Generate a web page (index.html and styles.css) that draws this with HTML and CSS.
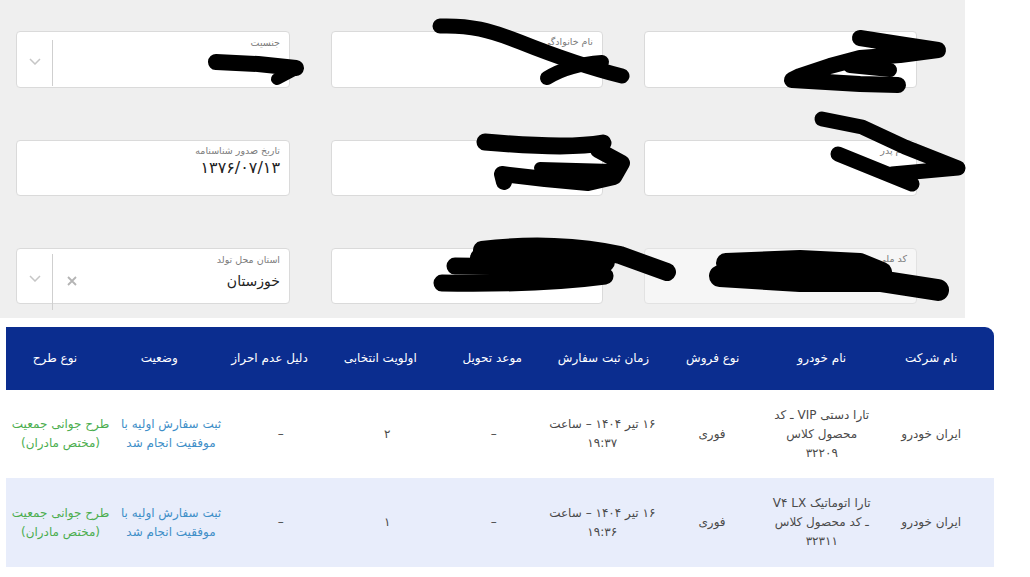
FILE: index.html
```html
<!DOCTYPE html>
<html lang="fa">
<head>
<meta charset="utf-8">
<title>اطلاعات سفارش</title>
<link rel="stylesheet" href="styles.css">
</head>
<body>
<div class="page">
  <section class="form-area" dir="rtl">
    <div class="field"><span class="label">نام</span></div>
    <div class="field"><span class="label">نام خانوادگی</span></div>
    <div class="field select">
      <div class="main"><span class="label">جنسیت</span><span class="value sel"></span></div>
      <span class="sep"></span>
      <span class="chev"><svg width="12" height="7" viewBox="0 0 12 7"><path d="M1 1 L6 6 L11 1" fill="none" stroke="#c6c6c6" stroke-width="1.5"/></svg></span>
    </div>

    <div class="field"><span class="label">نام پدر</span></div>
    <div class="field"><span class="label"></span></div>
    <div class="field"><span class="label">تاریخ صدور شناسنامه</span><span class="value date">۱۳۷۶/۰۷/۱۳</span></div>

    <div class="field disabled"><span class="label">کد ملی</span></div>
    <div class="field"><span class="label"></span></div>
    <div class="field select">
      <div class="main"><span class="label">استان محل تولد</span><span class="value sel">خوزستان</span></div>
      <span class="clear"><svg width="10" height="10" viewBox="0 0 10 10"><path d="M1 1 L9 9 M9 1 L1 9" fill="none" stroke="#b4b4b4" stroke-width="1.8"/></svg></span>
      <span class="sep long"></span>
      <span class="chev"><svg width="12" height="7" viewBox="0 0 12 7"><path d="M1 1 L6 6 L11 1" fill="none" stroke="#c6c6c6" stroke-width="1.5"/></svg></span>
    </div>
  </section>

  <section class="table" dir="rtl">
    <div class="thead">
      <div class="th">نام شرکت</div>
      <div class="th">نام خودرو</div>
      <div class="th">نوع فروش</div>
      <div class="th">زمان ثبت سفارش</div>
      <div class="th">موعد تحویل</div>
      <div class="th">اولویت انتخابی</div>
      <div class="th">دلیل عدم احراز</div>
      <div class="th">وضعیت</div>
      <div class="th">نوع طرح</div>
    </div>
    <div class="trow">
      <div class="td">ایران خودرو</div>
      <div class="td">تارا دستی VIP ـ کد<br>محصول کلاس<br>۳۲۲۰۹</div>
      <div class="td">فوری</div>
      <div class="td">۱۶ تیر ۱۴۰۴ – ساعت<br>۱۹:۳۷</div>
      <div class="td">–</div>
      <div class="td">۲</div>
      <div class="td">–</div>
      <div class="td status">ثبت سفارش اولیه با<br>موفقیت انجام شد</div>
      <div class="td plan">طرح جوانی جمعیت<br>(مختص مادران)</div>
    </div>
    <div class="trow alt">
      <div class="td">ایران خودرو</div>
      <div class="td">تارا اتوماتیک V۴ LX<br>ـ کد محصول کلاس<br>۳۲۳۱۱</div>
      <div class="td">فوری</div>
      <div class="td">۱۶ تیر ۱۴۰۴ – ساعت<br>۱۹:۳۶</div>
      <div class="td">–</div>
      <div class="td">۱</div>
      <div class="td">–</div>
      <div class="td status">ثبت سفارش اولیه با<br>موفقیت انجام شد</div>
      <div class="td plan">طرح جوانی جمعیت<br>(مختص مادران)</div>
    </div>
  </section>

  <svg class="scribbles" width="1030" height="577" viewBox="0 0 1030 577">
    <g fill="none" stroke="#000" stroke-linecap="round" stroke-linejoin="round">
      <path stroke-width="16" d="M216,62 L258,64 L296,68"/>
      <path stroke-width="12" d="M296,69 L277,79"/>
      <path stroke-width="15" d="M440,26 C470,25 490,30 520,42 S590,68 622,76"/>
      <path stroke-width="14" d="M547,78 C560,70 575,64 602,62"/>
      <path stroke-width="16" d="M860,38 L905,45 L938,50 L900,55 L860,58 L830,66 L800,76 L792,80 L860,84 L898,85"/>
      <path stroke-width="14" d="M850,66 L890,70"/>
      <path stroke-width="17" d="M485,142 C530,146 575,148 603,143"/>
      <path stroke-width="16" d="M598,150 L622,163 L614,177 L588,183 L545,179 L502,174 L504,182"/>
      <path stroke-width="12" d="M540,168 L612,170"/>
      <path stroke-width="15" d="M822,119 L862,127 L905,147 L958,168 L892,174"/>
      <path stroke-width="15" d="M838,154 L912,184"/>
      <path stroke-width="18" d="M482,250 C530,244 580,246 620,255 L667,272"/>
      <path stroke-width="20" d="M480,258 L605,262"/>
      <path stroke-width="17" d="M455,266 L600,268"/>
      <path stroke-width="17" d="M442,283 C500,284 560,282 605,276"/>
      <path stroke-width="20" d="M726,263 L800,260 L860,263 L882,272"/>
      <path stroke-width="22" d="M720,276 L800,281 L880,281 L938,290"/>
    </g>
  </svg>
</div>
</body>
</html>
```

FILE: styles.css
```css
* { box-sizing: border-box; }

html, body {
  margin: 0;
  padding: 0;
  background: #ffffff;
}

body {
  font-family: "DejaVu Sans", "Noto Sans", sans-serif;
  color: #333;
}

.page {
  position: relative;
  width: 1030px;
  height: 577px;
  overflow: hidden;
  direction: ltr;
}

/* ---------- form ---------- */
.form-area {
  width: 965px;
  height: 318px;
  background: #efefef;
  display: grid;
  grid-template-columns: 273px 272px 274px;
  grid-template-rows: 57px 56px 56px;
  column-gap: 41px;
  row-gap: 52px;
  padding: 31px 48px 0 16px;
}

.field {
  background: #fff;
  border: 1px solid #dadada;
  border-radius: 4px;
  display: flex;
  flex-direction: column;
  padding: 3px 9px 0 9px;
  min-width: 0;
}

.field.disabled {
  background: #f6f6f6;
  border-color: #e2e2e2;
}

.label {
  font-size: 9.5px;
  line-height: 14px;
  min-height: 14px;
  color: #7b7b7b;
  white-space: nowrap;
}

.value {
  font-size: 14px;
  line-height: 22px;
  color: #222;
  margin-top: 2px;
}

.value.date {
  font-size: 16px;
  line-height: 20px;
  margin-top: 0;
  letter-spacing: 0.7px;
}

.field.select {
  flex-direction: row;
  padding: 0;
}

.field.select .main {
  flex: 1;
  display: flex;
  flex-direction: column;
  padding: 4px 9px 0 9px;
}

.field.select .value.sel {
  margin-top: 3px;
  min-height: 22px;
}

.sep {
  width: 1px;
  background: #cfcfcf;
  margin: 8px 0 1px 0;
}

.sep.long {
  margin: 5px 0 -7px 0;
}

.chev {
  width: 35px;
  display: flex;
  align-items: center;
  justify-content: center;
  padding-top: 4px;
}

.clear {
  width: 37px;
  display: flex;
  align-items: center;
  justify-content: center;
  padding-top: 10px;
}

/* ---------- table ---------- */
.table {
  width: 988px;
  margin: 9px 0 0 6px;
}

.thead {
  height: 63px;
  background: #0b2d8f;
  border-radius: 0 9px 0 0;
  display: grid;
  grid-template-columns: 109.5px 109.5px 108.5px 110px 112.5px 111.5px 110px 110.5px 98px;
  padding-right: 8px;
}

.th {
  color: #fff;
  font-size: 12px;
  display: flex;
  align-items: center;
  justify-content: center;
  white-space: nowrap;
  padding-bottom: 2px;
}

.trow {
  display: grid;
  grid-template-columns: 109.5px 109.5px 110px 109.5px 107.5px 105.5px 107.5px 112px 109px;
  padding-right: 8px;
  height: 88px;
  background: #fff;
}

.trow.alt {
  height: 89px;
  background: #e8edfb;
}

.td {
  display: flex;
  align-items: center;
  justify-content: center;
  text-align: center;
  font-size: 12px;
  line-height: 19px;
  color: #4a4a4a;
  white-space: nowrap;
}

.td.status {
  color: #3f8fc8;
}

.td.plan {
  color: #4cae4f;
}

/* ---------- redaction marks ---------- */
.scribbles {
  position: absolute;
  top: 0;
  left: 0;
  pointer-events: none;
}
```
